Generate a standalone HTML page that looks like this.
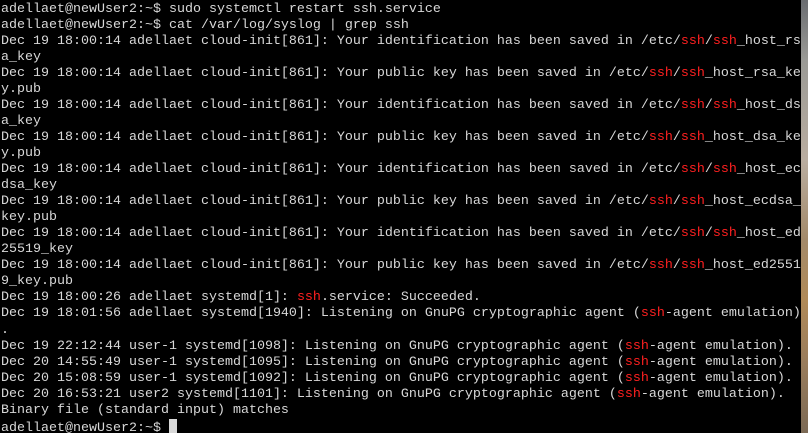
<!DOCTYPE html>
<html><head><meta charset="utf-8"><style>
html,body{margin:0;padding:0;width:808px;height:433px;overflow:hidden;background:#000}
#t{position:absolute;left:0;top:0;width:801px;height:433px;background:#000;overflow:hidden}
#bg{position:absolute;left:801px;top:0;width:7px;height:433px;background:linear-gradient(#6a6c70 0,#9a9a96 60px,#b9ada0 160px,#a38a6a 240px,#b08a58 300px,#9a7d5c 360px,#7c6a55 433px)}
#w{position:absolute;left:0;top:1.5px;width:801px;height:433px}
.l{position:absolute;left:1px;height:16px;font-family:"Liberation Mono","DejaVu Sans Mono",monospace;font-size:13.33px;line-height:16px;color:#d8d8d8;white-space:pre}
.r{color:#ff2020}
.c{display:inline-block;width:8px;height:14px;background:#d8d8d8;vertical-align:-2px}
</style></head><body><div id="t"><div id="w">
<div class="l" style="top:0px">adellaet@newUser2:~$ sudo systemctl restart ssh.service</div>
<div class="l" style="top:16.05px">adellaet@newUser2:~$ cat /var/log/syslog | grep ssh</div>
<div class="l" style="top:32.1px">Dec 19 18:00:14 adellaet cloud-init[861]: Your identification has been saved in /etc/<span class="r">ssh</span>/<span class="r">ssh</span>_host_rs</div>
<div class="l" style="top:48.15px">a_key</div>
<div class="l" style="top:64.2px">Dec 19 18:00:14 adellaet cloud-init[861]: Your public key has been saved in /etc/<span class="r">ssh</span>/<span class="r">ssh</span>_host_rsa_ke</div>
<div class="l" style="top:80.25px">y.pub</div>
<div class="l" style="top:96.3px">Dec 19 18:00:14 adellaet cloud-init[861]: Your identification has been saved in /etc/<span class="r">ssh</span>/<span class="r">ssh</span>_host_ds</div>
<div class="l" style="top:112.35px">a_key</div>
<div class="l" style="top:128.4px">Dec 19 18:00:14 adellaet cloud-init[861]: Your public key has been saved in /etc/<span class="r">ssh</span>/<span class="r">ssh</span>_host_dsa_ke</div>
<div class="l" style="top:144.45px">y.pub</div>
<div class="l" style="top:160.5px">Dec 19 18:00:14 adellaet cloud-init[861]: Your identification has been saved in /etc/<span class="r">ssh</span>/<span class="r">ssh</span>_host_ec</div>
<div class="l" style="top:176.55px">dsa_key</div>
<div class="l" style="top:192.6px">Dec 19 18:00:14 adellaet cloud-init[861]: Your public key has been saved in /etc/<span class="r">ssh</span>/<span class="r">ssh</span>_host_ecdsa_</div>
<div class="l" style="top:208.65px">key.pub</div>
<div class="l" style="top:224.7px">Dec 19 18:00:14 adellaet cloud-init[861]: Your identification has been saved in /etc/<span class="r">ssh</span>/<span class="r">ssh</span>_host_ed</div>
<div class="l" style="top:240.75px">25519_key</div>
<div class="l" style="top:256.8px">Dec 19 18:00:14 adellaet cloud-init[861]: Your public key has been saved in /etc/<span class="r">ssh</span>/<span class="r">ssh</span>_host_ed2551</div>
<div class="l" style="top:272.85px">9_key.pub</div>
<div class="l" style="top:288.9px">Dec 19 18:00:26 adellaet systemd[1]: <span class="r">ssh</span>.service: Succeeded.</div>
<div class="l" style="top:304.95px">Dec 19 18:01:56 adellaet systemd[1940]: Listening on GnuPG cryptographic agent (<span class="r">ssh</span>-agent emulation)</div>
<div class="l" style="top:321px">.</div>
<div class="l" style="top:337.05px">Dec 19 22:12:44 user-1 systemd[1098]: Listening on GnuPG cryptographic agent (<span class="r">ssh</span>-agent emulation).</div>
<div class="l" style="top:353.1px">Dec 20 14:55:49 user-1 systemd[1095]: Listening on GnuPG cryptographic agent (<span class="r">ssh</span>-agent emulation).</div>
<div class="l" style="top:369.15px">Dec 20 15:08:59 user-1 systemd[1092]: Listening on GnuPG cryptographic agent (<span class="r">ssh</span>-agent emulation).</div>
<div class="l" style="top:385.2px">Dec 20 16:53:21 user2 systemd[1101]: Listening on GnuPG cryptographic agent (<span class="r">ssh</span>-agent emulation).</div>
<div class="l" style="top:401.25px">Binary file (standard input) matches</div>
<div class="l" style="top:417.3px">adellaet@newUser2:~$ <span class="c"></span></div>
</div></div>
<div id="bg"></div>
</body></html>
